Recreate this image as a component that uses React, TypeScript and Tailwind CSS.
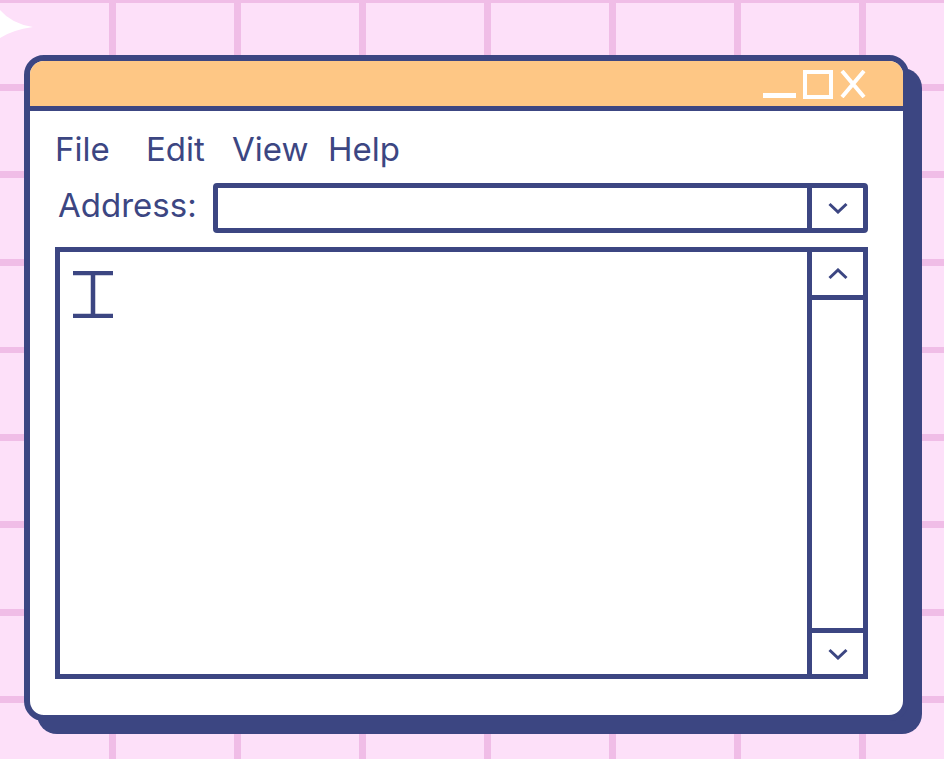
const navy = "#3c4682";

function Chevron({ up = false }: { up?: boolean }) {
  return (
    <svg width="20" height="12" viewBox="0 0 20 12" fill="none">
      <polyline
        points={up ? "1.5,10 10,2 18.5,10" : "1.5,2 10,10 18.5,2"}
        stroke={navy}
        strokeWidth="3"
      />
    </svg>
  );
}

export default function App() {
  return (
    <div className="relative h-[759px] w-[944px] overflow-hidden bg-[#fde0f9] bg-[image:repeating-linear-gradient(to_right,transparent_0_109px,#f0bde7_109px_116px,transparent_116px_125px),repeating-linear-gradient(to_bottom,#f0bde7_0_3px,transparent_3px_84px,#f0bde7_84px_87.5px)] pl-[24px] pt-[55px] font-[Inter,sans-serif]">
      {/* sparkle peeking in at the corner */}
      <svg className="absolute left-0 top-0" width="40" height="50" viewBox="0 0 40 50">
        <path d="M0 10 Q 12 24 33 27 Q 12 30 0 38 Z" fill="#ffffff" />
      </svg>

      <div className="flex h-[666px] w-[885px] flex-col overflow-hidden rounded-[20px] border-[6px] border-[#3c4682] bg-white shadow-[13px_13px_0_0_#3c4682]">
        {/* title bar */}
        <div className="flex h-[50px] shrink-0 items-end justify-end border-b-[5px] border-[#3c4682] bg-[#fec785] pb-[7px] pr-[37px]">
          <div className="mb-[1px] h-[5px] w-[33px] bg-white" />
          <div className="ml-[7px] h-[29px] w-[30px] border-[4px] border-white" />
          <svg className="mb-[1px] ml-[7px]" width="26" height="28" viewBox="0 0 26 28">
            <path d="M2 1 L24 27 M24 1 L2 27" stroke="#ffffff" strokeWidth="4" />
          </svg>
        </div>

        {/* body */}
        <div className="flex flex-1 flex-col pb-[36px] pl-[25px] pr-[35px] pt-[18px] text-[33px] leading-[40px] text-[#3c4682]">
          <div className="flex h-[40px]">
            <span className="w-[91px]">File</span>
            <span className="w-[86px]">Edit</span>
            <span className="w-[96px]">View</span>
            <span>Help</span>
          </div>

          <div className="mt-[14px] flex h-[50px]">
            <span className="mt-[2px] w-[158px] pl-[3px]">Address:</span>
            <div className="flex flex-1 rounded-[4px] border-[5px] border-[#3c4682]">
              <div className="flex-1" />
              <div className="flex w-[56px] items-center justify-center border-l-[5px] border-[#3c4682]">
                <Chevron />
              </div>
            </div>
          </div>

          <div className="mt-[14px] flex flex-1 border-[5px] border-[#3c4682]">
            <div className="flex-1 pl-[13px] pt-[19px]">
              <svg width="40" height="47" viewBox="0 0 40 47">
                <path d="M0 2 H40 M0 45 H40 M20 2 V45" stroke={navy} strokeWidth="4.5" />
              </svg>
            </div>
            <div className="flex w-[56px] flex-col border-l-[5px] border-[#3c4682]">
              <div className="flex h-[48px] items-center justify-center border-b-[5px] border-[#3c4682]">
                <Chevron up />
              </div>
              <div className="flex-1" />
              <div className="flex h-[46px] items-center justify-center border-t-[5px] border-[#3c4682]">
                <Chevron />
              </div>
            </div>
          </div>
        </div>
      </div>
    </div>
  );
}
